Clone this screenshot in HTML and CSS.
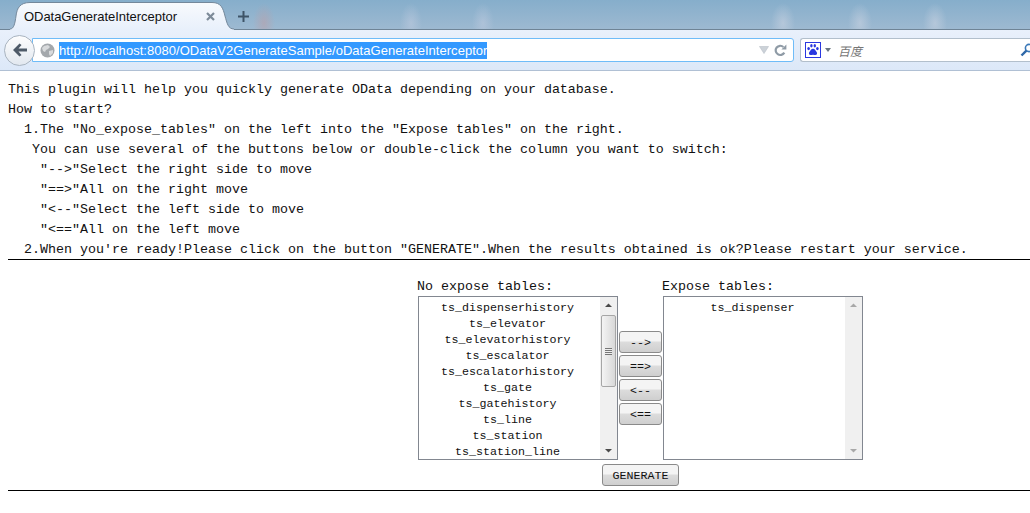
FILE: index.html
```html
<!DOCTYPE html>
<html lang="en">
<head>
<meta charset="utf-8">
<title>ODataGenerateInterceptor</title>
<link rel="stylesheet" href="styles.css">
</head>
<body>
<header class="browser">
  <div class="tabstrip">
    <div class="tab">
      <svg class="tab-shape" width="226" height="28" viewBox="0 0 226 28">
        <defs><linearGradient id="tabfill" x1="0" y1="0" x2="0" y2="1"><stop offset="0" stop-color="#f8fafd"/><stop offset="1" stop-color="#e8f0fb"/></linearGradient></defs>
        <path d="M1 28V27C5 27 6 21 7 14C8 6 11 .5 21 .5H203C212 .5 214 6 216 14C218 21 219 27 225 27V28z" fill="url(#tabfill)"/>
        <path d="M1 27C5 27 6 21 7 14C8 6 11 .5 21 .5H203C212 .5 214 6 216 14C218 21 219 27 225 27" fill="none" stroke="#74889b"/>
      </svg>
      <span class="tab-title">ODataGenerateInterceptor</span>
      <svg class="tab-close" width="9" height="9" viewBox="0 0 9 9"><path d="M1 1l7 7M8 1L1 8" stroke="#7d8b99" stroke-width="2.2" fill="none"/></svg>
    </div>
    <svg class="new-tab" width="11" height="11" viewBox="0 0 11 11"><path d="M5.5 0v11M0 5.5h11" stroke="#3e5468" stroke-width="2" fill="none"/></svg>
  </div>
  <div class="navbar">
    <div class="back">
      <svg width="16" height="14" viewBox="0 0 16 14"><path d="M7.5 0.5L1 7l6.5 6.5 2-1.6L6.5 8.6H15V5.4H6.5l3-3.3z" fill="#4e5a68"/></svg>
    </div>
    <div class="urlbar">
      <svg class="globe" width="15" height="15" viewBox="0 0 15 15"><circle cx="7.5" cy="7.5" r="7" fill="#a4a8ac"/><path d="M4 3l4-1 2 2-2 2-2 1-1 2-2-1-1-3zM9 8l4-1 0 3-3 3-1-2z" fill="#d8dadc"/></svg>
      <span class="url">http://localhost:8080/ODataV2GenerateSample/oDataGenerateInterceptor</span>
      <svg class="drop" width="10" height="8" viewBox="0 0 10 8"><path d="M0.500 .5h9L5 7.500z" fill="#ccd2d8" stroke="#b8c0c8" stroke-width=".6"/></svg>
      <svg class="reload" width="13" height="13" viewBox="0 0 13 13"><path d="M10.300 8.600A4.600 4.600 0 1 1 9.400 3" stroke="#8f9ba6" stroke-width="2.200" fill="none"/><path d="M7.400 5.600h5V.6z" fill="#8f9ba6"/></svg>
    </div>
    <div class="searchbar">
      <svg class="baidu" width="16" height="16" viewBox="0 0 16 16"><rect x=".5" y=".5" width="15" height="15" fill="#fff" stroke="#2a38e0"/><g fill="#2a38e0"><ellipse cx="3.600" cy="6.600" rx="1.300" ry="1.600"/><ellipse cx="6.400" cy="3.800" rx="1.200" ry="1.700"/><ellipse cx="9.800" cy="3.800" rx="1.200" ry="1.700"/><ellipse cx="12.400" cy="6.600" rx="1.300" ry="1.600"/><path d="M8 6.800c2 0 2.600 2 3.600 3.200 1 1.400.4 3-1.200 3-.9 0-1.600-.3-2.400-.3s-1.500.3-2.400.3c-1.600 0-2.200-1.600-1.200-3C5.400 8.800 6 6.800 8 6.800z"/></g></svg>
      <svg class="engine-drop" width="6" height="4" viewBox="0 0 6 4"><path d="M0 0h6L3 4z" fill="#6a7682"/></svg>
      <span class="search-hint">百度</span>
      <svg class="magnifier" width="14" height="14" viewBox="0 0 14 14"><circle cx="9" cy="5" r="3.600" stroke="#3a78b8" stroke-width="1.600" fill="none"/><path d="M6.400 7.600L1.500 12.500" stroke="#2e68a8" stroke-width="2.400"/></svg>
    </div>
  </div>
</header>
<main class="page">
  <p class="line">This plugin will help you quickly generate OData depending on your database.</p>
  <p class="line">How to start?</p>
  <p class="line step"><span class="num">1.</span>The "No_expose_tables" on the left into the "Expose tables" on the right.</p>
  <p class="line indent-3">You can use several of the buttons below or double-click the column you want to switch:</p>
  <p class="line indent-4">"--&gt;"Select the right side to move</p>
  <p class="line indent-4">"==&gt;"All on the right move</p>
  <p class="line indent-4">"&lt;--"Select the left side to move</p>
  <p class="line indent-4">"&lt;=="All on the left move</p>
  <p class="line step"><span class="num">2.</span>When you're ready!Please click on the button "GENERATE".When the results obtained is ok?Please restart your service.</p>
  <hr class="rule">
  <section class="picker">
    <div class="picker-row">
      <div class="column">
        <div class="caption">No expose tables:</div>
        <div class="listbox">
          <ul class="options">
            <li>ts_dispenserhistory</li>
            <li>ts_elevator</li>
            <li>ts_elevatorhistory</li>
            <li>ts_escalator</li>
            <li>ts_escalatorhistory</li>
            <li>ts_gate</li>
            <li>ts_gatehistory</li>
            <li>ts_line</li>
            <li>ts_station</li>
            <li>ts_station_line</li>
          </ul>
          <div class="scrollbar">
            <svg class="arrow" width="17" height="17" viewBox="0 0 17 17"><path d="M5 10h7L8.500 6.500z" fill="#4a4a4a"/></svg>
            <div class="track">
              <div class="thumb"><span class="grip"></span></div>
            </div>
            <svg class="arrow" width="17" height="17" viewBox="0 0 17 17"><path d="M5 7h7l-3.500 3.500z" fill="#4a4a4a"/></svg>
          </div>
        </div>
      </div>
      <div class="movers">
        <button class="btn move" type="button">--&gt;</button>
        <button class="btn move" type="button">==&gt;</button>
        <button class="btn move" type="button">&lt;--</button>
        <button class="btn move" type="button">&lt;==</button>
      </div>
      <div class="column">
        <div class="caption">Expose tables:</div>
        <div class="listbox">
          <ul class="options">
            <li>ts_dispenser</li>
          </ul>
          <div class="scrollbar">
            <svg class="arrow" width="17" height="17" viewBox="0 0 17 17"><path d="M5 10h7L8.500 6.500z" fill="#a8a8a8"/></svg>
            <div class="track"></div>
            <svg class="arrow" width="17" height="17" viewBox="0 0 17 17"><path d="M5 7h7l-3.500 3.500z" fill="#a8a8a8"/></svg>
          </div>
        </div>
      </div>
    </div>
    <button class="btn generate" type="button">GENERATE</button>
  </section>
  <hr class="rule">
</main>
</body>
</html>
```

FILE: styles.css
```css
* { box-sizing: border-box; }
html, body { margin: 0; padding: 0; background: #fff; overflow: hidden; }
body { width: 1030px; height: 513px; }

.browser { height: 71px; font-family: "Liberation Sans", Arial, sans-serif; }

.tabstrip {
  height: 30px;
  display: flex;
  align-items: flex-end;
  padding-left: 14px;
  background:
    radial-gradient(ellipse 11px 20px at 264px 23px, rgba(185,160,170,.6), transparent),
    radial-gradient(ellipse 11px 20px at 411px 23px, rgba(195,205,225,.5), transparent),
    radial-gradient(ellipse 11px 20px at 483px 23px, rgba(195,205,225,.5), transparent),
    radial-gradient(ellipse 12px 20px at 783px 23px, rgba(200,210,225,.6), transparent),
    radial-gradient(ellipse 12px 20px at 860px 23px, rgba(200,210,225,.6), transparent),
    radial-gradient(ellipse 12px 20px at 935px 23px, rgba(200,210,225,.6), transparent),
    linear-gradient(#86aecb, #9db9d1);
  border-bottom: 1px solid #6f8496;
}
.tab {
  position: relative;
  width: 212px;
  height: 28px;
  display: flex;
  align-items: center;
  padding: 0 11px 0 10px;
  margin-bottom: -1px;
}
.tab-shape { position: absolute; left: -5px; top: 0; }
.tab-title { position: relative; flex: 1; font-size: 13px; letter-spacing: -.04px; color: #111; }
.tab-close { position: relative; }
.new-tab { margin: 0 0 7px 12px; }

.navbar {
  height: 41px;
  display: flex;
  align-items: center;
  padding-left: 4px;
  background: linear-gradient(#e9f0fb, #dce8f8);
  border-bottom: 1px solid #b0c0d4;
}
.back {
  width: 31px;
  height: 31px;
  flex: none;
  border-radius: 50%;
  border: 1px solid #a9b4c0;
  background: linear-gradient(#fdfdfe, #e2e8ef);
  display: flex;
  align-items: center;
  justify-content: center;
  z-index: 1;
}
.urlbar {
  width: 762px;
  height: 24px;
  margin-left: -3px;
  display: flex;
  align-items: center;
  padding: 0 6px 0 7px;
  background: #fff;
  border: 1px solid #6fbcf8;
  border-radius: 0 3px 3px 0;
  font-size: 13px;
}
.globe { flex: none; margin-right: 4px; }
.url { flex: 1; background: linear-gradient(#39f, #39f) no-repeat 0 0 / 428px 100%; color: #fff; line-height: 17px; letter-spacing: .03px; }
.drop { margin: 0 5px 0 8px; }
.searchbar {
  flex: 1;
  height: 24px;
  margin-left: 6px;
  display: flex;
  align-items: center;
  padding-left: 4px;
  background: #fff;
  border: 1px solid #b2bfcc;
  border-right: 0;
  border-radius: 3px 0 0 3px;
}
.engine-drop { margin-left: 4px; }
.search-hint {
  flex: 1;
  margin-left: 7px;
  font: italic 12px "Noto Sans CJK SC", sans-serif;
  color: #777;
}
.magnifier { margin-right: -4px; }

.page {
  padding: 8px 0 0 8px;
  font-family: "Liberation Mono", "Courier New", monospace;
  font-size: 13.33px;
  color: #111;
}
.line { margin: 0; height: 20px; line-height: 22px; white-space: pre; }
.step { padding-left: 16px; }
.num { display: inline-block; width: 16px; }
.indent-3 { padding-left: 24px; }
.indent-4 { padding-left: 32px; }

.rule { margin: 0; border: 0; border-top: 1px solid #000; height: 1px; }

.picker { height: 230px; padding-top: 16px; display: flex; flex-direction: column; }
.picker-row { display: flex; align-items: stretch; padding-left: 410px; height: 184px; }
.column { display: flex; flex-direction: column; }
.caption { height: 20px; line-height: 22px; margin-left: -1px; }
.listbox {
  width: 200px;
  height: 164px;
  display: flex;
  background: #fff;
  border: 1px solid #828790;
}
.options {
  flex: 1;
  margin: 0;
  padding: 3px 4px 0 0;
  list-style: none;
  text-align: center;
  font-size: 11.67px;
  line-height: 16px;
}
.scrollbar {
  width: 17px;
  flex: none;
  display: flex;
  flex-direction: column;
  background: #f0f0f0;
}
.scrollbar .arrow { flex: none; }
.track { flex: 1; padding-top: 1px; }
.thumb {
  width: 15px;
  height: 72px;
  margin: 0 1px;
  border: 1px solid #a6a6a6;
  border-radius: 2px;
  background: linear-gradient(90deg, #f4f4f4, #d8d8d8);
  display: flex;
  align-items: center;
  justify-content: center;
}
.grip {
  width: 7px;
  height: 7px;
  background: repeating-linear-gradient(#777 0 1px, #eee 1px 2px);
}

.movers {
  width: 45px;
  padding: 55px 0 0 1px;
  display: flex;
  flex-direction: column;
  gap: 2px;
}
.btn {
  padding: 1px 0 0;
  font-family: "Liberation Mono", "Courier New", monospace;
  font-size: 11.67px;
  color: #111;
  border: 1px solid #8a8a8a;
  border-radius: 3px;
  background: linear-gradient(#f4f4f4 0 45%, #dcdcdc 50%, #cfcfcf);
}
.move { width: 43px; height: 22px; padding-top: 2px; }
.generate {
  width: 77px;
  height: 22px;
  margin: 4px 0 0 594px;
}
```
